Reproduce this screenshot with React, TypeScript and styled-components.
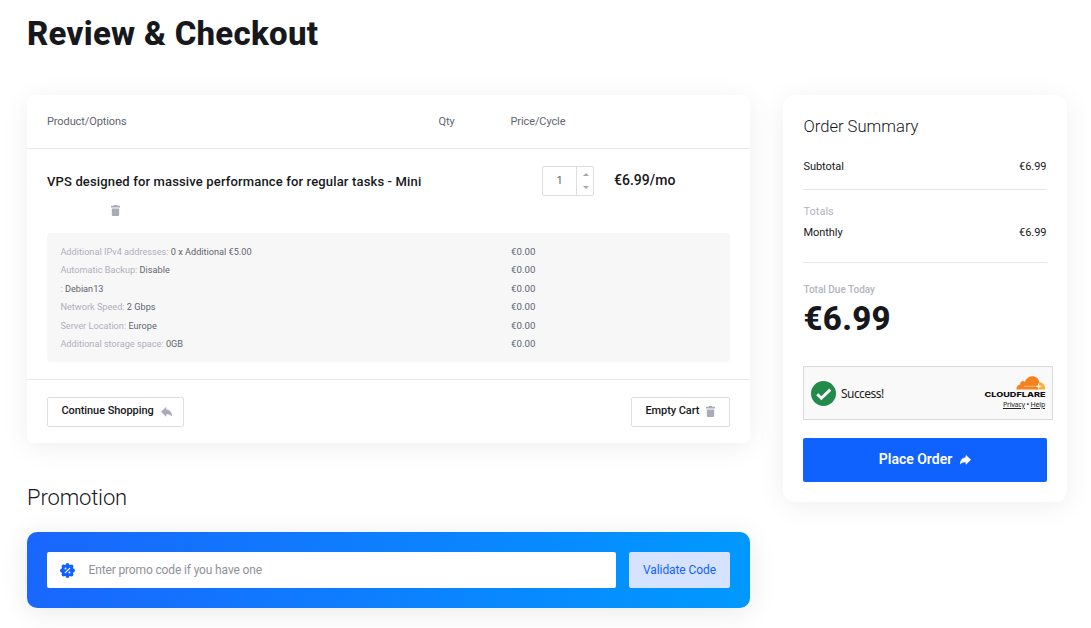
import React from "react";
import styled, { createGlobalStyle } from "styled-components";

const GlobalStyle = createGlobalStyle`
  *, *::before, *::after { box-sizing: border-box; }
  body {
    margin: 0;
    background: #fff;
    color: #17181c;
    font-family: Roboto, "Liberation Sans", sans-serif;
  }
  button, input { font-family: inherit; }
  h1, h2, h3, p { margin: 0; }
`;

const Page = styled.div`
  width: 1091px;
  height: 628px;
  padding: 14px 24px 0 27px;
  overflow: hidden;
`;

const Title = styled.h1`
  height: 40px;
  line-height: 40px;
  font-size: 33px;
  font-weight: 800;
  letter-spacing: 0.27px;
  white-space: nowrap;
`;

const Columns = styled.div`
  display: grid;
  grid-template-columns: 723px 284px;
  column-gap: 33px;
  align-items: start;
  margin-top: 41px;
`;

const Card = styled.section<{ $radius: number }>`
  background: #fff;
  border-radius: ${(p) => p.$radius}px;
  box-shadow: 0 4px 28px rgba(0, 0, 0, 0.065);
`;

const CartHead = styled.div`
  display: grid;
  grid-template-columns: 391.5px 72px 1fr;
  height: 54px;
  padding: 0 20px;
  border-bottom: 1px solid #e6e7e9;
  font-size: 11px;
  line-height: 53px;
  letter-spacing: -0.1px;
  color: #62656f;
`;

const CartItem = styled.div`
  height: 230px;
  padding: 17px 20px 0;
`;

const ItemRow = styled.div`
  display: grid;
  grid-template-columns: 495px 72px 1fr;
  align-items: center;
  height: 30px;
`;

const ItemName = styled.h3`
  padding-top: 2px;
  font-size: 13px;
  font-weight: 500;
  line-height: 28px;
  letter-spacing: 0.15px;
`;

const ItemPrice = styled.span`
  font-size: 14px;
  font-weight: 500;
  line-height: 28px;
  padding-bottom: 2px;
`;

const Stepper = styled.div`
  display: flex;
  width: 52px;
  height: 30px;
  border: 1px solid #dcdee2;
  border-radius: 2px;
`;

const StepperValue = styled.span`
  flex: 1;
  border-right: 1px solid #dcdee2;
  color: #62656f;
  font-size: 11px;
  line-height: 28px;
  text-align: center;
`;

const StepperArrows = styled.span`
  display: flex;
  flex-direction: column;
  align-items: center;
  justify-content: space-between;
  width: 16px;
  padding: 6px 0 6px 1px;
`;

const Remove = styled.div`
  display: flex;
  margin: 9px 0 0 64px;
  height: 11px;
`;

const Options = styled.div`
  display: grid;
  grid-template-columns: 450.5px 1fr;
  grid-auto-rows: 18.4px;
  height: 129px;
  margin-top: 17px;
  padding: 10px 13px 0 13.4px;
  border-radius: 4px;
  background: #f7f7f7;
  font-size: 9.17px;
  line-height: 18.4px;
  color: #62656f;
`;

const OptionPrice = styled.div`
  font-size: 9.7px;
  letter-spacing: 0.05px;
`;

const OptionLabel = styled.span`
  color: #afb1ba;
`;

const CartFoot = styled.div`
  display: flex;
  justify-content: space-between;
  height: 64px;
  padding: 17px 20px 0;
  border-top: 1px solid #e6e7e9;
`;

const OutlineButton = styled.button<{ $width: number }>`
  display: flex;
  align-items: center;
  gap: 7px;
  width: ${(p) => p.$width}px;
  height: 30px;
  padding: 0 0 0 13.4px;
  border: 1px solid #dcdee2;
  border-radius: 2px;
  background: #fff;
  color: #17181c;
  font-size: 11px;
  font-weight: 500;
  line-height: 26px;
  letter-spacing: -0.07px;
  white-space: nowrap;

  span { padding-bottom: 2px; }
  svg { margin-bottom: 1px; }
`;

const PromoTitle = styled.h2`
  margin-top: 41px;
  height: 28px;
  font-size: 22px;
  font-weight: 300;
  line-height: 28px;
  letter-spacing: -0.15px;
`;

const PromoPanel = styled.div`
  display: flex;
  gap: 13px;
  height: 76px;
  margin-top: 20px;
  padding: 20px;
  border-radius: 10px;
  background: linear-gradient(100deg, #1a66ff 0%, #0099ff 100%);
  box-shadow: 0 4px 28px rgba(0, 0, 0, 0.09);
`;

const PromoField = styled.label`
  display: flex;
  align-items: center;
  gap: 13.5px;
  width: 569px;
  height: 36px;
  padding-left: 13px;
  border-radius: 2px;
  background: #fff;
`;

const PromoInput = styled.input`
  flex: 1;
  height: 34px;
  padding: 0;
  border: 0;
  outline: 0;
  background: transparent;
  font-size: 12px;
  letter-spacing: -0.14px;

  &::placeholder { color: #8f9298; }
`;

const ValidateButton = styled.button`
  width: 101px;
  height: 36px;
  padding: 0;
  border: 0;
  border-radius: 2px;
  background: #d6e3ff;
  color: #1062fe;
  font-size: 12px;
  font-weight: 450;
  letter-spacing: -0.08px;
`;

const Summary = styled.div`
  height: 407px;
  padding: 21px 20px 0;
`;

const SummaryTitle = styled.h2`
  height: 22px;
  padding-left: 0.5px;
  font-size: 16.6px;
  font-weight: 300;
  line-height: 22px;
`;

const SummaryRow = styled.div<{ $top: number }>`
  display: flex;
  justify-content: space-between;
  height: 16px;
  margin-top: ${(p) => p.$top}px;
  padding: 0 0.5px;
  font-size: 11px;
  line-height: 16px;
  letter-spacing: -0.05px;
`;

const Rule = styled.hr<{ $top: number }>`
  height: 1px;
  margin: ${(p) => p.$top}px 0 0;
  border: 0;
  background: #e6e7e9;
`;

const Caption = styled.p<{ $size: number; $top: number; $weight: number }>`
  height: 16px;
  margin-top: ${(p) => p.$top}px;
  padding-left: 0.5px;
  color: #b3b5bf;
  font-size: ${(p) => p.$size}px;
  font-weight: ${(p) => p.$weight};
  line-height: 16px;
`;

const TotalDue = styled.p`
  height: 40px;
  margin-top: 1px;
  padding-left: 0.5px;
  font-size: 33px;
  font-weight: 800;
  line-height: 40px;
  letter-spacing: 0.3px;
`;

const Turnstile = styled.div`
  display: flex;
  align-items: center;
  width: 250px;
  height: 54px;
  margin-top: 27px;
  padding: 0 6px 0 7px;
  border: 1px solid #d9d9d9;
  background: #f9f9f9;
  color: #232323;
  font-family: "Noto Sans", "Open Sans", sans-serif;
`;

const SuccessText = styled.span`
  flex: 1;
  padding-left: 5px;
  font-size: 12px;
  letter-spacing: -0.55px;
`;

const Brand = styled.div`
  display: flex;
  flex-direction: column;
  align-items: flex-end;
`;

const BrandLinks = styled.div`
  margin: 2px 1px 0 0;
  height: 12px;
  font-size: 7px;
  line-height: 12px;
  letter-spacing: -0.2px;
  white-space: nowrap;

  span { text-decoration: underline; text-underline-offset: 1px; }
`;

const PlaceOrder = styled.button`
  display: flex;
  align-items: center;
  justify-content: center;
  gap: 8px;
  width: 244px;
  height: 44px;
  margin-top: 18px;
  padding: 0;
  border: 0;
  border-radius: 2px;
  background: #1062fe;
  color: #fff;
  font-size: 14px;
  font-weight: 600;

  span { padding-bottom: 2px; }
`;

const TrashIcon = () => (
  <svg width="9" height="11" viewBox="0 0 9 11" fill="#a9abb8">
    <path d="M2.8 0h3.4v.8H9v1.6H0V.8h2.800zM.8 3.400h7.400v6.400q0 1.200-1.200 1.200H2Q.8 11 .8 9.800z" />
  </svg>
);

const ShareArrow = ({ flip, color }: { flip?: boolean; color: string }) => (
  <svg width="11" height="10" viewBox="0 0 11 10" fill={color} stroke={color} strokeWidth=".7" strokeLinejoin="round">
    <path
      transform={flip ? "translate(11 0) scale(-1 1)" : undefined}
      d="M6 .5v2.200C2.600 2.800.5 4.800.4 8.800c1.300-1.500 3-2 5.600-1.900V9.200l4.600-4.400z"
    />
  </svg>
);

const Caret = ({ down }: { down?: boolean }) => (
  <svg width="6" height="3" viewBox="0 0 6 3" fill="#a8a8a8">
    <path d={down ? "M0 0h6L3 3z" : "M0 3h6L3 0z"} />
  </svg>
);

const PromoIcon = () => (
  <svg width="15" height="15" viewBox="0 0 15 15">
    <g fill="#1062fe">
      <circle cx="7.500" cy="7.500" r="6.100" />
      <circle cx="7.500" cy="1.900" r="1.900" />
      <circle cx="7.500" cy="13.100" r="1.900" />
      <circle cx="1.900" cy="7.500" r="1.900" />
      <circle cx="13.100" cy="7.500" r="1.900" />
      <circle cx="3.500" cy="3.500" r="1.900" />
      <circle cx="11.500" cy="3.500" r="1.900" />
      <circle cx="3.500" cy="11.500" r="1.900" />
      <circle cx="11.500" cy="11.500" r="1.900" />
    </g>
    <path d="M5.300 9.700l4.400-4.400" stroke="#fff" strokeWidth="1.200" strokeLinecap="round" />
    <circle cx="5.500" cy="5.500" r=".95" fill="#fff" />
    <circle cx="9.500" cy="9.500" r=".95" fill="#fff" />
  </svg>
);

const CheckBadge = () => (
  <svg width="25" height="25" viewBox="0 0 25 25">
    <circle cx="12.500" cy="12.500" r="12.500" fill="#228b49" />
    <path d="M6.300 13.200l4 4 9-8.600" fill="none" stroke="#fff" strokeWidth="2.900" />
  </svg>
);

const CloudflareLogo = () => (
  <svg width="62" height="21" viewBox="0 0 62 21" overflow="visible">
    <path fill="#fbad41" d="M52 13.500l1.500-7c4.500-.7 7.700 1.500 7.700 7z" />
    <path
      fill="#f6821f"
      d="M32.500 13.500c-.2-3.200 1.300-4.800 3.700-5.100-.4-2.700 2.700-4.200 4.700-2.700C42.300 2.300 45.200.3 48.300.3c3.700 0 6.200 2.300 6.800 5.500L54 13.500z"
    />
    <path d="M40 10.300h13" stroke="#fff" strokeWidth=".7" fill="none" opacity=".6" />
    <path d="M54.500 6.700l.8 2.700 2.900.9-2.900.9-.8 1.800-.8-1.800-2.200-.9 2.200-.9z" fill="#fff" opacity=".85" />
    <text
      x="0.500"
      y="21"
      fontFamily="Inter, sans-serif"
      fontWeight="800"
      fontSize="6.600"
      textLength="61"
      lengthAdjust="spacingAndGlyphs"
      fill="#111"
    >
      CLOUDFLARE
    </text>
  </svg>
);

const options: [string, string, string][] = [
  ["Additional IPv4 addresses:", "0 x Additional €5.00", "€0.00"],
  ["Automatic Backup:", "Disable", "€0.00"],
  [":", "Debian13", "€0.00"],
  ["Network Speed:", "2 Gbps", "€0.00"],
  ["Server Location:", "Europe", "€0.00"],
  ["Additional storage space:", "0GB", "€0.00"],
];

export default function App() {
  return (
    <>
      <GlobalStyle />
      <Page>
        <Title>Review &amp; Checkout</Title>
        <Columns>
          <main>
            <Card $radius={7}>
              <CartHead>
                <span>Product/Options</span>
                <span>Qty</span>
                <span>Price/Cycle</span>
              </CartHead>
              <CartItem>
                <ItemRow>
                  <ItemName>VPS designed for massive performance for regular tasks - Mini</ItemName>
                  <Stepper>
                    <StepperValue>1</StepperValue>
                    <StepperArrows>
                      <Caret />
                      <Caret down />
                    </StepperArrows>
                  </Stepper>
                  <ItemPrice>€6.99/mo</ItemPrice>
                </ItemRow>
                <Remove>
                  <TrashIcon />
                </Remove>
                <Options>
                  {options.map(([label, value, price]) => (
                    <React.Fragment key={label}>
                      <div>
                        <OptionLabel>{label}</OptionLabel> {value}
                      </div>
                      <OptionPrice>{price}</OptionPrice>
                    </React.Fragment>
                  ))}
                </Options>
              </CartItem>
              <CartFoot>
                <OutlineButton $width={137}>
                  <span>Continue Shopping</span>
                  <ShareArrow flip color="#a9abb8" />
                </OutlineButton>
                <OutlineButton $width={99}>
                  <span>Empty Cart</span>
                  <TrashIcon />
                </OutlineButton>
              </CartFoot>
            </Card>
            <PromoTitle>Promotion</PromoTitle>
            <PromoPanel>
              <PromoField>
                <PromoIcon />
                <PromoInput placeholder="Enter promo code if you have one" />
              </PromoField>
              <ValidateButton>Validate Code</ValidateButton>
            </PromoPanel>
          </main>
          <Card as="aside" $radius={12}>
            <Summary>
              <SummaryTitle>Order Summary</SummaryTitle>
              <SummaryRow $top={21}>
                <span>Subtotal</span>
                <span>€6.99</span>
              </SummaryRow>
              <Rule $top={14} />
              <Caption $size={11} $top={14} $weight={400}>Totals</Caption>
              <SummaryRow $top={5}>
                <span>Monthly</span>
                <span>€6.99</span>
              </SummaryRow>
              <Rule $top={21} />
              <Caption $size={10} $top={19} $weight={500}>Total Due Today</Caption>
              <TotalDue>€6.99</TotalDue>
              <Turnstile>
                <CheckBadge />
                <SuccessText>Success!</SuccessText>
                <Brand>
                  <CloudflareLogo />
                  <BrandLinks>
                    <span>Privacy</span> • <span>Help</span>
                  </BrandLinks>
                </Brand>
              </Turnstile>
              <PlaceOrder>
                <span>Place Order</span>
                <ShareArrow color="#fff" />
              </PlaceOrder>
            </Summary>
          </Card>
        </Columns>
      </Page>
    </>
  );
}
